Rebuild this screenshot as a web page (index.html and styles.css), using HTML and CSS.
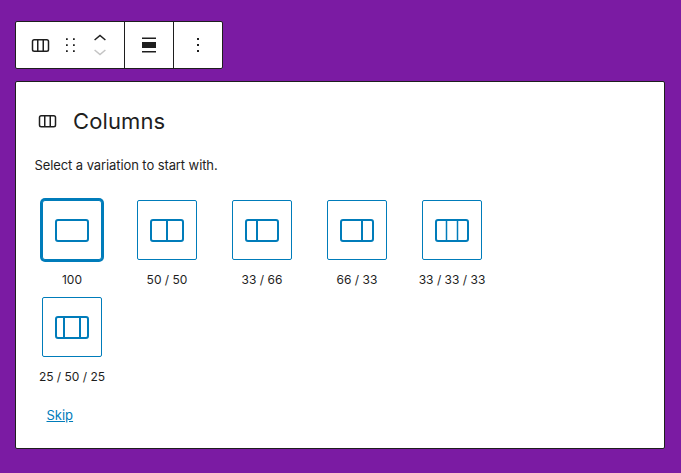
FILE: index.html
```html
<!DOCTYPE html>
<html lang="en">
<head>
<meta charset="utf-8">
<title>Columns</title>
<link rel="stylesheet" href="styles.css">
</head>
<body>
<div class="toolbar">
  <div class="group group-main">
    <svg class="tb-col" width="24" height="24" viewBox="0 0 24 24"><rect x="4.5" y="6.75" width="16" height="11.5" rx="1.75" fill="none" stroke="#1e1e1e" stroke-width="1.5"/><path d="M9.75 7v11M15.25 7v11" stroke="#1e1e1e" stroke-width="1.5"/></svg>
    <svg class="tb-drag" width="18" height="24" viewBox="0 0 18 24"><path d="M5 5.25h1.75V7H5zM12 5.25h1.75V7H12zM5 11.25h1.75V13H5zM12 11.25h1.75V13H12zM5 17.25h1.75V19H5zM12 17.25h1.75V19H12z" fill="#1e1e1e"/></svg>
    <div class="movers">
      <svg width="16" height="12" viewBox="0 0 16 12"><path d="M2.6 8 8 3.4 13.4 8" fill="none" stroke="#1e1e1e" stroke-width="1.5"/></svg>
      <svg width="16" height="12" viewBox="0 0 16 12"><path d="M2.6 4 8 8.6 13.4 4" fill="none" stroke="#c4c4c4" stroke-width="1.5"/></svg>
    </div>
  </div>
  <div class="group group-align">
    <svg width="24" height="24" viewBox="0 0 24 24"><path d="M5 4.5h14V6H5zM5 18h14v1.5H5z" fill="#1e1e1e"/><rect x="5" y="9" width="14" height="6" fill="#1e1e1e"/></svg>
  </div>
  <div class="group group-more">
    <svg width="24" height="24" viewBox="0 0 24 24"><path d="M11 5h2v2h-2zM11 11h2v2h-2zM11 17h2v2h-2z" fill="#1e1e1e"/></svg>
  </div>
</div>

<section class="panel">
  <header class="panel-head">
    <svg width="24" height="24" viewBox="0 0 24 24"><rect x="4.5" y="6.75" width="16" height="11" rx="1.75" fill="none" stroke="#1e1e1e" stroke-width="1.5"/><path d="M9.75 7v11M15.25 7v11" stroke="#1e1e1e" stroke-width="1.5"/></svg>
    <h1 class="panel-title">Columns</h1>
  </header>
  <p class="panel-text">Select a variation to start with.</p>
  <ul class="variations">
    <li class="variation">
      <button class="tile tile-selected"><svg width="48" height="48" viewBox="0 0 48 48"><rect x="8" y="14" width="32" height="21" rx="2" class="ic"/></svg></button>
      <span class="label">100</span>
    </li>
    <li class="variation">
      <button class="tile"><svg width="48" height="48" viewBox="0 0 48 48"><rect x="8" y="14" width="32" height="21" rx="2" class="ic"/><path d="M24 14v21" class="ic"/></svg></button>
      <span class="label">50 / 50</span>
    </li>
    <li class="variation">
      <button class="tile"><svg width="48" height="48" viewBox="0 0 48 48"><rect x="8" y="14" width="32" height="21" rx="2" class="ic"/><path d="M19 14v21" class="ic"/></svg></button>
      <span class="label">33 / 66</span>
    </li>
    <li class="variation">
      <button class="tile"><svg width="48" height="48" viewBox="0 0 48 48"><rect x="8" y="14" width="32" height="21" rx="2" class="ic"/><path d="M29 14v21" class="ic"/></svg></button>
      <span class="label">66 / 33</span>
    </li>
    <li class="variation">
      <button class="tile"><svg width="48" height="48" viewBox="0 0 48 48"><rect x="8" y="14" width="32" height="21" rx="2" class="ic"/><path d="M18.5 14v21M29.5 14v21" class="ic ic-thin"/></svg></button>
      <span class="label">33 / 33 / 33</span>
    </li>
    <li class="variation">
      <button class="tile"><svg width="48" height="48" viewBox="0 0 48 48"><rect x="8" y="14" width="32" height="21" rx="2" class="ic"/><path d="M16 14v21M32 14v21" class="ic"/></svg></button>
      <span class="label">25 / 50 / 25</span>
    </li>
  </ul>
  <a class="skip" href="#">Skip</a>
</section>
</body>
</html>
```
FILE: styles.css
```css
* { box-sizing: border-box; }
html, body { height: 100%; }
body {
  margin: 0;
  padding: 21px 16px 0 15px;
  background: #7b1ba3;
  font-family: Inter, "Liberation Sans", sans-serif;
  color: #1e1e1e;
  overflow: hidden;
}
svg { display: block; }
.toolbar {
  display: flex;
  width: 208px;
  height: 48px;
  background: #fff;
  border: 1px solid #1e1e1e;
  border-radius: 2px;
}
.group { display: flex; align-items: center; height: 100%; }
.group + .group { border-left: 1px solid #1e1e1e; }
.group-main { width: 108px; padding-left: 12px; }
.group-align { width: 49px; justify-content: center; }
.group-more { flex: 1; justify-content: center; }
.tb-drag { margin-left: 9px; }
.movers { display: flex; flex-direction: column; margin-left: 13px; gap: 2px; }
.panel {
  margin-top: 12px;
  height: 368px;
  background: #fff;
  border: 1px solid #1e1e1e;
  border-radius: 2px;
  padding: 27px 19px 0;
}
.panel-head { display: flex; align-items: center; gap: 14px; height: 24px; }
.panel-title { margin: 0; font-size: 22px; font-weight: 400; line-height: 24px; letter-spacing: 0.12px; }
.panel-text { margin: 23px 0 0 -0.5px; font-size: 13px; line-height: 18px; letter-spacing: -0.09px; }
.variations {
  list-style: none;
  display: grid;
  grid-template-columns: repeat(5, 95px);
  margin: 26px 0 0 -10.5px;
  padding: 0;
}
.variation {
  display: flex;
  flex-direction: column;
  align-items: center;
  height: 97px;
  white-space: nowrap;
}
.tile {
  display: flex;
  align-items: center;
  justify-content: center;
  width: 60px;
  height: 60px;
  padding: 0;
  background: #fff;
  border: 1px solid #007cba;
  border-radius: 2px;
  flex: none;
}
.tile-selected { border-radius: 3px; box-shadow: 0 0 0 2px #007cba; }
.ic { fill: none; stroke: #007cba; stroke-width: 2; }
.ic-thin { stroke-width: 1.5; }
.label { margin-top: 11px; font-size: 12px; line-height: 18px; }
.skip { display: inline-block; margin: 12px 0 0 11.5px; font-size: 13px; line-height: 18px; color: #007cba; text-decoration: underline; }
```
